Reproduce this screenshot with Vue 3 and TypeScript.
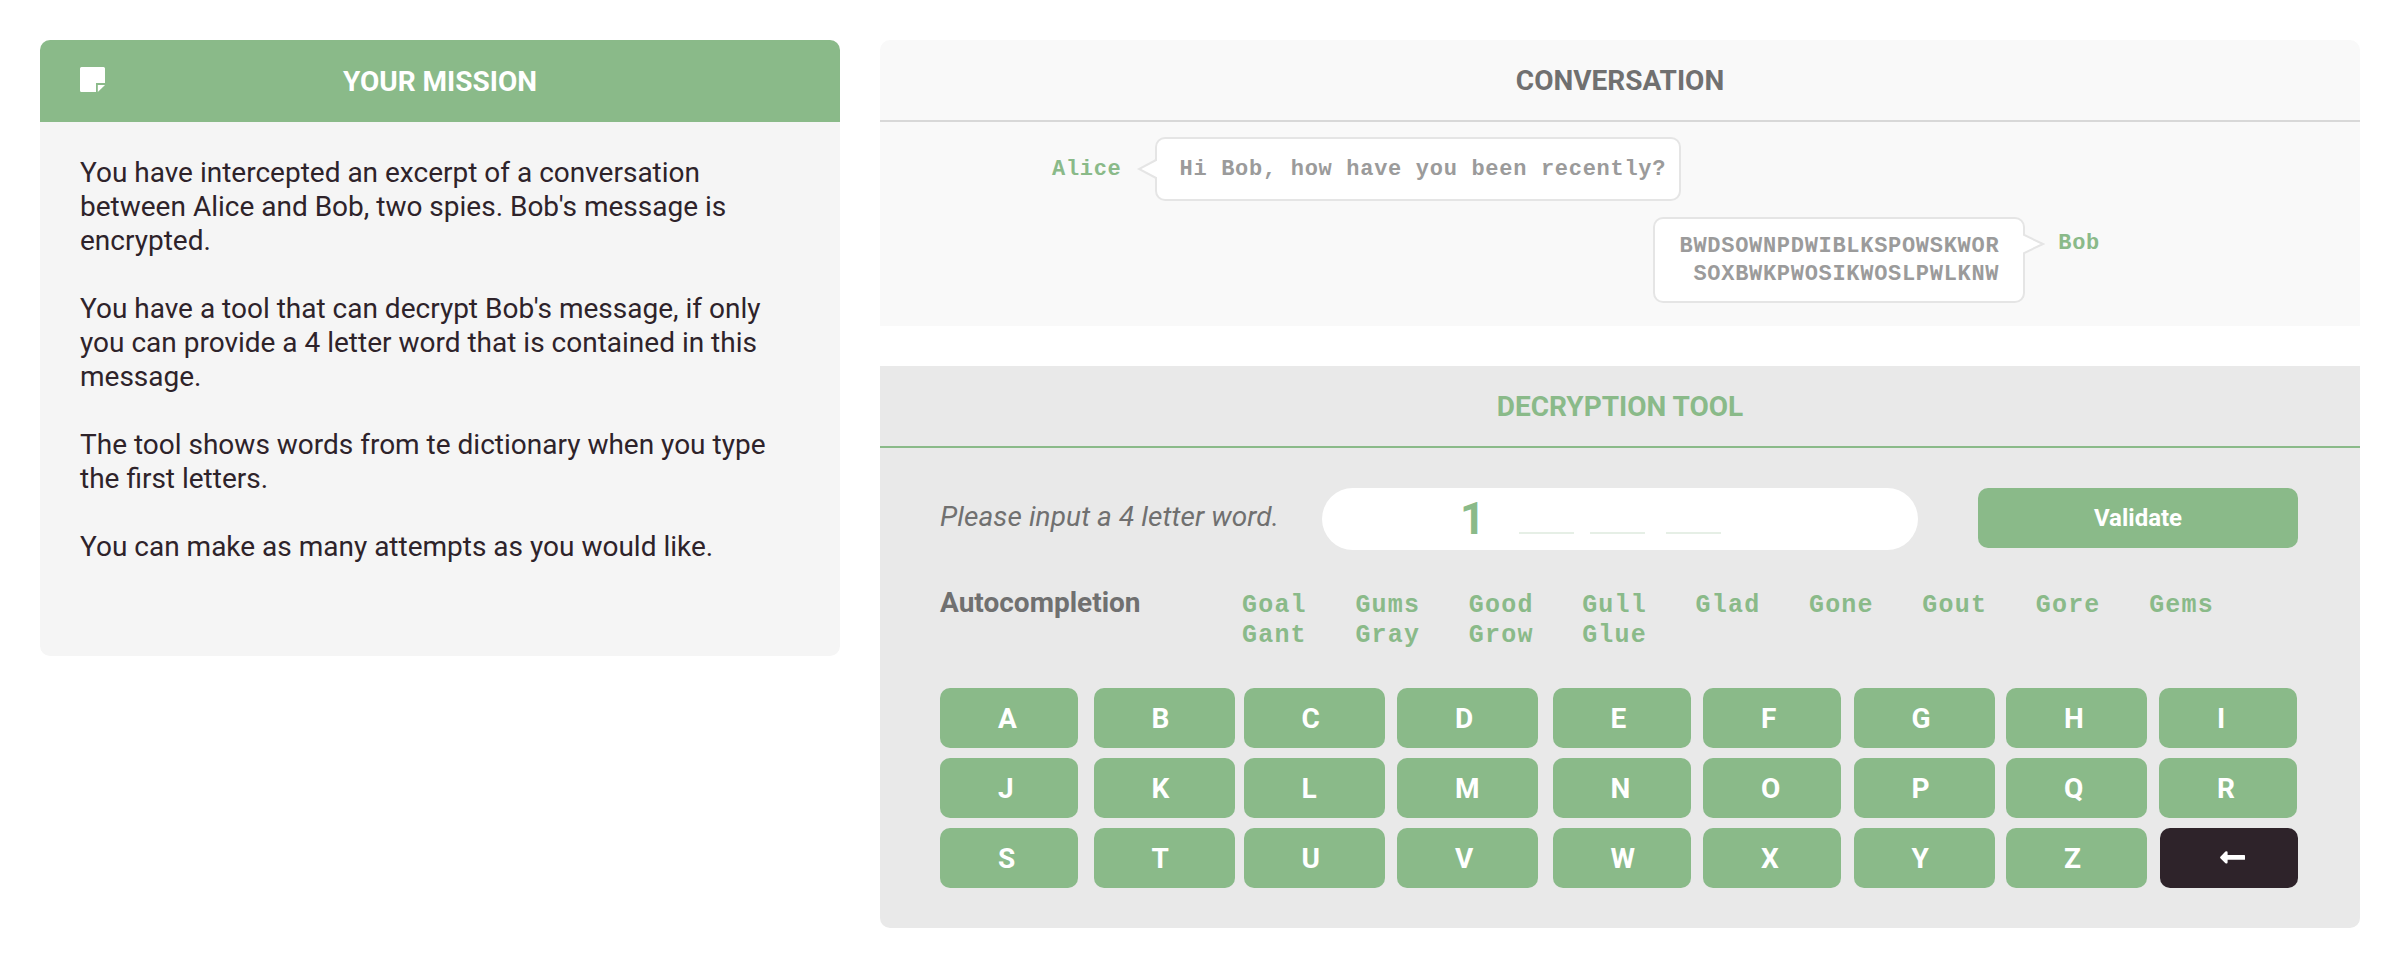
<script setup lang="ts">
import { ref } from 'vue'

const mission: string[] = [
  "You have intercepted an excerpt of a conversation between Alice and Bob, two spies. Bob's message is encrypted.",
  "You have a tool that can decrypt Bob's message, if only you can provide a 4 letter word that is contained in this message.",
  'The tool shows words from te dictionary when you type the first letters.',
  'You can make as many attempts as you would like.',
]
const suggestions: string[] = [
  'Goal', 'Gums', 'Good', 'Gull', 'Glad', 'Gone', 'Gout', 'Gore', 'Gems',
  'Gant', 'Gray', 'Grow', 'Glue',
]
const columns: string[] = ['AJS', 'BKT', 'CLU', 'DMV', 'ENW', 'FOX', 'GPY', 'HQZ', 'IR']
const entry = ref<string>('1')
</script>

<template>
  <main class="page">
    <section class="mission">
      <header class="mission-head">
        <svg class="note" viewBox="0 0 26 26" width="26" height="26">
          <path d="M1.5 0H23.5Q25 0 25 1.5V16H16V25H1.5Q0 25 0 23.5V1.5Q0 0 1.5 0Z" fill="#fff" />
          <path d="M17.8 18H25L17.8 25Z" fill="#fff" />
        </svg>
        <h2>YOUR MISSION</h2>
      </header>
      <div class="mission-body">
        <p v-for="text in mission" :key="text">{{ text }}</p>
      </div>
    </section>

    <div class="right">
      <section class="conversation">
        <header class="bar"><h2>CONVERSATION</h2></header>
        <div class="line alice">
          <span class="who">Alice</span>
          <div class="bubble">
            <svg class="tail" viewBox="0 0 20 22" width="20" height="22">
              <path d="M20 1.5L2 11L20 20.5" fill="#fff" stroke="#e5e5e5" stroke-width="2" />
            </svg>
            <span>Hi Bob, how have you been recently?</span>
          </div>
        </div>
        <div class="line bob">
          <div class="bubble">
            <svg class="tail" viewBox="0 0 22 22" width="22" height="22">
              <path d="M0 1.5L20 11L0 20.5" fill="#fff" stroke="#e5e5e5" stroke-width="2" />
            </svg>
            <span>BWDSOWNPDWIBLKSPOWSKWOR<br />SOXBWKPWOSIKWOSLPWLKNW</span>
          </div>
          <span class="who">Bob</span>
        </div>
      </section>

      <section class="tool">
        <header class="bar"><h2>DECRYPTION TOOL</h2></header>
        <div class="entry-row">
          <span class="prompt">Please input a 4 letter word.</span>
          <div class="field">
            <b>{{ entry }}</b>
            <i class="slot"></i><i class="slot"></i><i class="slot"></i>
          </div>
          <button class="validate">Validate</button>
        </div>
        <div class="auto-row">
          <span class="auto-label">Autocompletion</span>
          <div class="words"><span v-for="w in suggestions" :key="w">{{ w }}</span></div>
        </div>
        <div class="keyboard">
          <div v-for="col in columns" :key="col" class="key-col">
            <button v-for="k in col" :key="k" class="key">{{ k }}</button>
            <button v-if="col.length === 2" class="key erase" aria-label="Erase">
              <svg viewBox="0 0 26 14" width="26" height="14">
                <path d="M0.4 5.8L5.4 0.6Q7.6 -0.4 7.6 1.6V4.1H24.4Q25 4.1 25 4.7V8.2Q25 8.8 24.4 8.8H7.6V11.2Q7.6 13.2 5.4 12.2L0.4 7.2Q-0.2 6.5 0.4 5.8Z" fill="#fff" />
              </svg>
            </button>
          </div>
        </div>
      </section>
    </div>
  </main>
</template>

<style>
body { margin: 0; background: #fff; }
</style>

<style scoped>
.page {
  box-sizing: border-box;
  width: 2402px;
  height: 968px;
  padding: 40px;
  display: flex;
  align-items: flex-start;
  gap: 40px;
  font-family: Roboto, sans-serif;
  font-size: 28px;
  color: #2e232a;
}
h2 { margin: 0; padding-top: 2px; font-size: 28px; line-height: 34px; font-weight: 700; }
button { border: 0; padding: 0; font-family: inherit; color: #fff; background: #8aba89; border-radius: 10px; }
.mission { width: 800px; height: 616px; border-radius: 10px; background: #f5f5f5; overflow: hidden; }
.mission-head { height: 82px; background: #8aba89; color: #fff; display: grid; grid-template-columns: 40px 1fr 40px; align-items: center; }
.note { grid-column: 2; grid-row: 1; margin-bottom: 2px; }
.mission-head h2 { grid-column: 2; grid-row: 1; justify-self: center; }
.mission-body { padding: 34px 40px; }
.mission-body p { margin: 0 0 34px; line-height: 34px; }
.right { width: 1480px; display: flex; flex-direction: column; gap: 40px; }
.conversation { height: 286px; background: #f9f9f9; border-radius: 10px 10px 0 0; }
.bar { box-sizing: border-box; height: 82px; display: flex; align-items: center; justify-content: center; border-bottom: 2px solid #d8d8d8; color: #707070; }
.line { display: flex; font-family: "Liberation Mono", "Courier New", monospace; font-weight: 700; font-size: 22px; letter-spacing: 0.7px; line-height: 28px; color: #9b9b9b; }
.who { color: #8aba89; line-height: 66px; }
.bubble { box-sizing: border-box; position: relative; background: #fff; border: 2px solid #e5e5e5; border-radius: 10px; white-space: nowrap; }
.alice { margin: 15px 0 0 172px; }
.alice .bubble { width: 526px; height: 64px; margin-left: 33px; padding: 17px 0 0 23px; }
.bob { justify-content: flex-end; margin: 16px 260px 0 0; }
.bob .bubble { width: 372px; height: 86px; margin-right: 33px; padding: 14px 24px 0 0; text-align: right; }
.bob .who { line-height: 54px; }
.bob .who, .alice .who { height: 64px; }
.tail { position: absolute; }
.alice .tail { left: -20px; top: 19px; }
.bob .tail { right: -22px; top: 14px; }
.tool { height: 562px; background: #e9e9e9; border-radius: 0 0 10px 10px; }
.tool .bar { border-color: #8aba89; color: #8aba89; }
.entry-row { display: flex; padding: 40px 0 0 60px; height: 62px; }
.prompt { width: 382px; font-style: italic; color: #707070; line-height: 58px; letter-spacing: 0.1px; white-space: nowrap; }
.field { width: 596px; height: 62px; border-radius: 31px; background: #fff; display: flex; }
.field b { width: 22px; margin: 5px 37px 0 138px; font-size: 44px; line-height: 52px; color: #8aba89; }
.slot { width: 55px; height: 2px; background: #e6efe6; margin: 44px 15.5px 0 0; }
.slot:nth-of-type(2) { margin-right: 21.5px; }
.validate { width: 320px; height: 60px; margin-left: 60px; font-size: 24px; font-weight: 700; }
.auto-row { display: flex; padding: 36px 0 0 60px; height: 102px; }
.auto-label { width: 302px; font-weight: 700; color: #707070; line-height: 34px; }
.words { display: grid; grid-template-columns: repeat(9, 113.4px); grid-auto-rows: 30px; padding-top: 5px; font: 700 25px/30px "Liberation Mono", "Courier New", monospace; letter-spacing: 1.2px; color: #8aba89; align-content: start; }
.keyboard { display: grid; grid-template-columns: 153.5px 150px 153.5px 155.5px 150.5px 150.5px 152.5px 153px 139px; padding-left: 60px; }
.key-col { display: flex; flex-direction: column; gap: 10px; width: 141px; }
.key-col:nth-child(4n + 1), .key-col:nth-child(6) { width: 138px; }
.key { width: 100%; height: 60px; font-size: 28px; font-weight: 700; text-align: left; padding: 2px 0 0 58px; line-height: 58px; }
.erase { background: #2e232a; display: flex; align-items: center; margin-left: 1px; padding-top: 0; padding-left: 60px; }
</style>
